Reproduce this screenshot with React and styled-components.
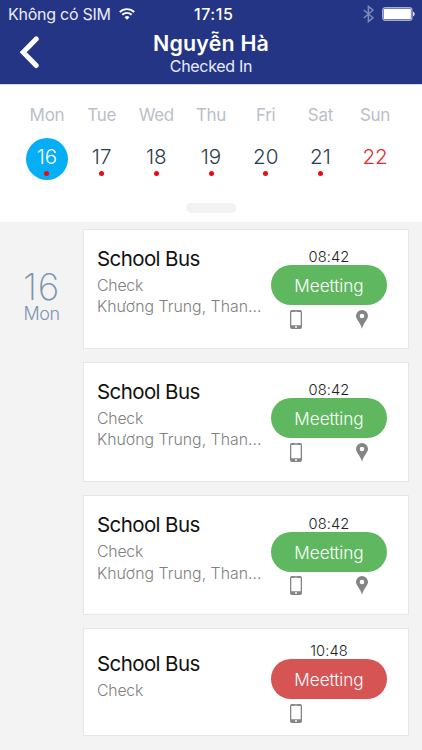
import React from "react";
import styled, { createGlobalStyle } from "styled-components";

const GlobalStyle = createGlobalStyle`
  * { box-sizing: border-box; }
  body {
    margin: 0;
    background: #f3f3f3;
    font-family: "Inter", "Helvetica Neue", sans-serif;
    overflow: hidden;
  }
`;

const Screen = styled.main`
  display: flex;
  flex-direction: column;
  width: 422px;
  height: 750px;
  overflow: hidden;
  background: #f3f3f3;
`;

const Header = styled.header`
  flex: none;
  height: 84px;
  background: #243586;
  color: #fff;
`;

const StatusBar = styled.div`
  display: grid;
  grid-template-columns: 186px auto 1fr;
  align-items: center;
  height: 28px;
  padding: 0 7px 0 8px;
  font-size: 16px;
  line-height: 28px;
`;

const Carrier = styled.div`
  display: flex;
  align-items: center;
  gap: 8px;
  letter-spacing: -0.25px;
  color: #e9ecf8;
  white-space: nowrap;
`;

const Clock = styled.div`
  font-weight: 500;
  letter-spacing: 0.55px;
`;

const StatusIcons = styled.div`
  display: flex;
  align-items: center;
  justify-content: flex-end;
  gap: 8px;
`;

const NavBar = styled.div`
  display: grid;
  grid-template-columns: 60px 1fr 60px;
  height: 56px;
`;

const BackButton = styled.button`
  display: flex;
  align-items: flex-start;
  padding: 7px 0 0 18px;
  border: 0;
  background: none;
  color: inherit;
`;

const Heading = styled.div`
  display: flex;
  flex-direction: column;
  align-items: center;
  padding-top: 2px;
`;

const Title = styled.h1`
  margin: 0;
  font-size: 21.4px;
  font-weight: 600;
  line-height: 27px;
  letter-spacing: 0.2px;
`;

const Subtitle = styled.div`
  font-size: 16px;
  line-height: 18px;
  letter-spacing: -0.3px;
  color: #e9ecf8;
`;

const Calendar = styled.section`
  flex: none;
  display: flex;
  flex-direction: column;
  align-items: center;
  height: 138px;
  padding-top: 20px;
  border-top: 1px solid #d5d8e8;
  background: #fff;
`;

const Week = styled.div`
  display: grid;
  grid-template-columns: repeat(7, 54.7px);
`;

const Day = styled.div`
  display: flex;
  flex-direction: column;
  align-items: center;
  gap: 13px;
`;

const DayName = styled.div`
  font-size: 17px;
  line-height: 20px;
  letter-spacing: -0.3px;
  color: #b9bfca;
`;

const DayNumber = styled.div`
  display: flex;
  flex-direction: column;
  align-items: center;
  width: 42px;
  height: 42px;
  padding-top: 7px;
  border-radius: 50%;
  background: ${(p) => (p.$selected ? "#05aef5" : "transparent")};
  color: ${(p) => (p.$selected ? "#fff" : p.$holiday ? "#e22c30" : "#2d3c4f")};
  font-size: 20.6px;
  font-weight: 300;
  line-height: 24px;
`;

const EventDot = styled.span`
  width: 5px;
  height: 5px;
  margin-top: 1.5px;
  border-radius: 50%;
  background: #ec0a0e;
`;

const Handle = styled.div`
  width: 50px;
  height: 10px;
  margin-top: 23px;
  border-radius: 5px;
  background: #f1f2f4;
`;

const Agenda = styled.section`
  display: grid;
  grid-template-columns: 83px 326px;
  padding-top: 6.6px;
`;

const DateLabel = styled.aside`
  display: flex;
  flex-direction: column;
  align-items: center;
  padding-top: 40px;
  color: #7f93ae;
`;

const DateNumber = styled.div`
  font-size: 37px;
  font-weight: 200;
  line-height: 36px;
  letter-spacing: 0.8px;
`;

const DateName = styled.div`
  font-size: 18px;
  font-weight: 300;
  line-height: 18px;
  letter-spacing: -0.5px;
`;

const CardList = styled.div`
  display: flex;
  flex-direction: column;
  gap: 13.3px;
`;

const Card = styled.article`
  display: flex;
  justify-content: space-between;
  align-items: flex-start;
  height: ${(p) => (p.$compact ? 108 : 120)}px;
  padding: ${(p) => (p.$compact ? "13.5px" : "19.6px")} 21px 0 13px;
  border: 1px solid #e6e6e6;
  background: #fff;
`;

const Details = styled.div`
  width: 168px;
  margin-top: ${(p) => (p.$compact ? 7.6 : -3.4)}px;
`;

const EventName = styled.h2`
  margin: 0 0 3px;
  color: #111;
  font-size: 20.5px;
  font-weight: 400;
  line-height: 26px;
  letter-spacing: -0.6px;
`;

const Detail = styled.div`
  color: #808080;
  font-size: 15.8px;
  font-weight: 300;
  line-height: 21.3px;
  letter-spacing: ${(p) => (p.$wide ? 0.03 : -0.2)}px;
  white-space: nowrap;
`;

const Status = styled.div`
  display: flex;
  flex-direction: column;
  align-items: center;
  width: 116px;
`;

const Time = styled.time`
  color: #222;
  font-size: 14.7px;
  font-weight: 300;
  line-height: 16px;
  letter-spacing: 0.1px;
`;

const Pill = styled.div`
  width: 116px;
  height: 40px;
  border-radius: 20px;
  background: ${(p) => (p.$late ? "#d65453" : "#5fb760")};
  color: #fff;
  font-size: 17.2px;
  font-weight: 300;
  line-height: 41px;
  letter-spacing: -0.05px;
  text-align: center;
`;

const IconRow = styled.div`
  display: grid;
  grid-template-columns: 66px 66px;
  justify-items: center;
  padding-top: 4.6px;
  color: #858585;
`;

const WifiIcon = () => (
  <svg width="16" height="12" viewBox="0 0 16 12" fill="none" stroke="#fff" strokeWidth="1.9">
    <path d="M.8 4.1a10.3 10.3 0 0 1 14.4 0" />
    <path d="M3.3 6.8a6.8 6.8 0 0 1 9.4 0" />
    <path d="M8 11.7 5.5 9.2a3.6 3.6 0 0 1 5 0z" fill="#fff" stroke="none" />
  </svg>
);

const BluetoothIcon = () => (
  <svg width="11" height="18" viewBox="0 0 11 18" fill="none" stroke="#7f8abb" strokeWidth="1.5">
    <path d="M.8 5 10 12.8 5.4 16.6V1.4L10 5.2.8 13" />
  </svg>
);

const BatteryIcon = () => (
  <svg width="33" height="14" viewBox="0 0 33 14">
    <rect x=".7" y=".7" width="29.2" height="12.6" rx="2.6" fill="none" stroke="#a5aed5" strokeWidth="1.3" />
    <rect x="1.7" y="1.7" width="27.2" height="10.6" rx="1.4" fill="#fff" />
    <path d="M31 4.7c2.2.6 2.2 4 0 4.6z" fill="#dfe2f2" />
  </svg>
);

const BackIcon = () => (
  <svg width="23" height="34" viewBox="0 0 23 34" fill="none" stroke="#fff" strokeWidth="5" strokeLinecap="round" strokeLinejoin="miter">
    <path d="M18.2 3.9 5.2 17.2 18.2 30.5" />
  </svg>
);

const PhoneIcon = () => (
  <svg width="12" height="19" viewBox="0 0 12 19">
    <path
      fill="currentColor"
      fillRule="evenodd"
      d="M2 0h8a2 2 0 0 1 2 2v15a2 2 0 0 1-2 2H2a2 2 0 0 1-2-2V2a2 2 0 0 1 2-2zM1.3 2v13.2h9.4V2zM4.6.8v.4h2.8V.8zM6 16.1a.95.95 0 1 0 0 1.9.95.95 0 0 0 0-1.900z"
    />
  </svg>
);

const PinIcon = () => (
  <svg width="12" height="19" viewBox="0 0 12 19">
    <path
      fill="currentColor"
      fillRule="evenodd"
      d="M6 0a6 6 0 0 1 6 6c0 3.4-4.6 7-6 12.8C4.6 13 0 9.4 0 6a6 6 0 0 1 6-6zM6 3.7a2.3 2.3 0 1 0 0 4.6 2.3 2.3 0 0 0 0-4.6z"
    />
  </svg>
);

const days = [
  { name: "Mon", number: 16, events: true, selected: true },
  { name: "Tue", number: 17, events: true },
  { name: "Wed", number: 18, events: true },
  { name: "Thu", number: 19, events: true },
  { name: "Fri", number: 20, events: true },
  { name: "Sat", number: 21, events: true },
  { name: "Sun", number: 22, holiday: true },
];

const events = [
  { id: 1, time: "08:42", place: "Khương Trung, Than..." },
  { id: 2, time: "08:42", place: "Khương Trung, Than..." },
  { id: 3, time: "08:42", place: "Khương Trung, Than..." },
  { id: 4, time: "10:48", late: true },
];

function EventCard({ event }) {
  const compact = !event.place;
  return (
    <Card $compact={compact}>
      <Details $compact={compact}>
        <EventName>School Bus</EventName>
        <Detail>Check</Detail>
        {event.place && <Detail $wide>{event.place}</Detail>}
      </Details>
      <Status>
        <Time>{event.time}</Time>
        <Pill $late={event.late}>Meetting</Pill>
        <IconRow>
          <PhoneIcon />
          {event.place && <PinIcon />}
        </IconRow>
      </Status>
    </Card>
  );
}

export default function App() {
  return (
    <Screen>
      <GlobalStyle />
      <Header>
        <StatusBar>
          <Carrier>
            Không có SIM
            <WifiIcon />
          </Carrier>
          <Clock>17:15</Clock>
          <StatusIcons>
            <BluetoothIcon />
            <BatteryIcon />
          </StatusIcons>
        </StatusBar>
        <NavBar>
          <BackButton aria-label="Back">
            <BackIcon />
          </BackButton>
          <Heading>
            <Title>Nguyễn Hà</Title>
            <Subtitle>Checked In</Subtitle>
          </Heading>
        </NavBar>
      </Header>
      <Calendar>
        <Week>
          {days.map((day) => (
            <Day key={day.name}>
              <DayName>{day.name}</DayName>
              <DayNumber $selected={day.selected} $holiday={day.holiday}>
                {day.number}
                {day.events && <EventDot />}
              </DayNumber>
            </Day>
          ))}
        </Week>
        <Handle />
      </Calendar>
      <Agenda>
        <DateLabel>
          <DateNumber>16</DateNumber>
          <DateName>Mon</DateName>
        </DateLabel>
        <CardList>
          {events.map((event) => (
            <EventCard key={event.id} event={event} />
          ))}
        </CardList>
      </Agenda>
    </Screen>
  );
}
